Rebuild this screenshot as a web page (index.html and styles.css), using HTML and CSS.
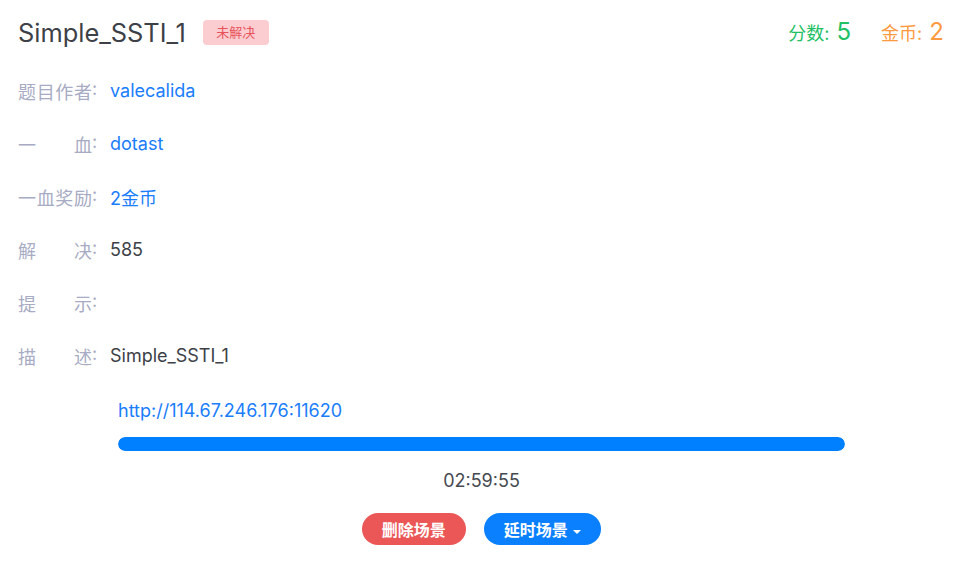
FILE: index.html
```html
<!DOCTYPE html>
<html lang="en">
<head>
    <meta charset="UTF-8">
    <meta name="viewport" content="width=device-width, initial-scale=1.0">
    <title>Simple_SSTI_1</title>
    <link rel="stylesheet" href="styles.css">
</head>
<body>
    <div class="challenge">
        <div class="challenge-header">
            <div class="title-group">
                <h1 class="title">Simple_SSTI_1</h1>
                <span class="badge">未解决</span>
            </div>
            <div class="scores">
                <span class="score green">分数: <b>5</b></span>
                <span class="score orange">金币: <b>2</b></span>
            </div>
        </div>

        <div class="row">
            <span class="label"><span class="label-text">题目作者</span>:</span>
            <a class="value link" href="#">valecalida</a>
        </div>
        <div class="row">
            <span class="label"><span class="label-text">一血</span>:</span>
            <a class="value link" href="#">dotast</a>
        </div>
        <div class="row">
            <span class="label"><span class="label-text">一血奖励</span>:</span>
            <span class="value link">2金币</span>
        </div>
        <div class="row">
            <span class="label"><span class="label-text">解决</span>:</span>
            <span class="value">585</span>
        </div>
        <div class="row">
            <span class="label"><span class="label-text">提示</span>:</span>
            <span class="value"></span>
        </div>
        <div class="row">
            <span class="label"><span class="label-text">描述</span>:</span>
            <span class="value">Simple_SSTI_1</span>
        </div>

        <div class="scene">
            <a class="scene-url" href="#">http://114.67.246.176:11620</a>
            <div class="progress"><div class="progress-bar" style="width: 100%"></div></div>
            <div class="timer">02:59:55</div>
            <div class="actions">
                <button class="btn btn-red">删除场景</button>
                <button class="btn btn-blue">延时场景 <span class="caret"></span></button>
            </div>
        </div>
    </div>
</body>
</html>
```

FILE: styles.css
```css
body {
    margin: 0;
    background: #fff;
    font-family: Inter, "Noto Sans CJK SC", sans-serif;
    color: #3d4147;
}
.challenge {
    padding: 0 24px 0 18px;
}
.challenge-header {
    display: flex;
    justify-content: space-between;
    align-items: center;
    height: 64px;
}
.title-group {
    display: flex;
    align-items: center;
}
.title {
    margin: 0;
    font-size: 25.4px;
    font-weight: 400;
    color: #3d4147;
}
.badge {
    margin-left: 17px;
    padding: 0 13.5px;
    height: 25px;
    line-height: 25px;
    border-radius: 4px;
    background: #fbcdd0;
    color: #e8525b;
    font-size: 13px;
}
.scores {
    display: flex;
    gap: 30px;
    margin-top: -2px;
}
.score {
    font-size: 18px;
}
.score b {
    font-weight: 400;
    font-size: 24px;
    margin-left: 2px;
}
.green {
    color: #22c065;
}
.orange {
    color: #fd9a40;
}
.row {
    display: flex;
    align-items: center;
    height: 53px;
    font-size: 18px;
}
.label {
    display: flex;
    width: 80px;
    margin-right: 12px;
    color: #a7abc3;
}
.label-text {
    width: 74px;
    text-align: justify;
    text-align-last: justify;
}
.value {
    color: #3d4147;
}
.link {
    color: #1a7dfb;
    text-decoration: none;
}
.scene {
    width: 727px;
    margin-left: 100px;
    padding-top: 17px;
}
.scene-url {
    display: block;
    font-size: 18px;
    color: #1a7dfb;
    text-decoration: none;
    line-height: 24px;
}
.progress {
    margin-top: 14px;
    height: 14px;
    border-radius: 7px;
    background: #e9ecef;
    overflow: hidden;
}
.progress-bar {
    height: 100%;
    background: #0080ff;
    border-radius: 7px;
}
.timer {
    text-align: center;
    font-size: 18px;
    margin-top: 19px;
    color: #454950;
}
.actions {
    display: flex;
    justify-content: center;
    gap: 18px;
    margin-top: 22px;
}
.btn {
    border: none;
    height: 32px;
    padding: 0 20px;
    border-radius: 16px;
    color: #fff;
    font-family: "Noto Sans CJK SC", sans-serif;
    font-weight: 700;
    font-size: 16px;
}
.btn-red {
    background: #eb5757;
}
.btn-blue {
    background: #0a80ff;
}
.caret {
    display: inline-block;
    vertical-align: middle;
    margin-left: 2px;
    border-top: 4px solid #fff;
    border-left: 4px solid transparent;
    border-right: 4px solid transparent;
}
```
